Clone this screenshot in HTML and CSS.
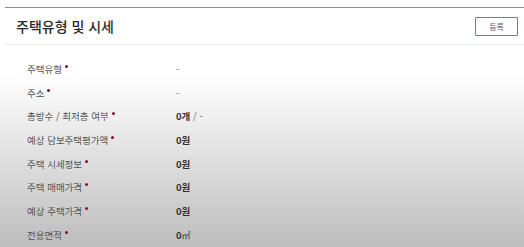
FILE: index.html
```html
<!DOCTYPE html>
<html lang="ko">
<head>
    <meta charset="UTF-8">
    <meta name="viewport" content="width=device-width, initial-scale=1.0">
    <title>주택유형 및 시세</title>
    <link rel="stylesheet" href="styles.css">
</head>
<body>

<div class="section">
    <header class="section-head">
        <h2>주택유형 및 시세</h2>
        <button class="btn-regist">등록</button>
    </header>

    <!-- 주택 정보 목록 -->
    <dl class="info-list">
        <div class="info-row">
            <dt>주택유형<span class="req"></span></dt>
            <dd class="empty">-</dd>
        </div>
        <div class="info-row">
            <dt>주소<span class="req"></span></dt>
            <dd class="empty">-</dd>
        </div>
        <div class="info-row">
            <dt>총방수 / 최저층 여부<span class="req"></span></dt>
            <dd>0개 <span class="light">/ -</span></dd>
        </div>
        <div class="info-row">
            <dt>예상 담보주택평가액<span class="req"></span></dt>
            <dd>0원</dd>
        </div>
        <div class="info-row">
            <dt>주택 시세정보<span class="req"></span></dt>
            <dd>0원</dd>
        </div>
        <div class="info-row">
            <dt>주택 매매가격<span class="req"></span></dt>
            <dd>0원</dd>
        </div>
        <div class="info-row">
            <dt>예상 주택가격<span class="req"></span></dt>
            <dd>0원</dd>
        </div>
        <div class="info-row">
            <dt>전용면적<span class="req"></span></dt>
            <dd>0<span class="unit">㎡</span></dd>
        </div>
    </dl>
</div>

</body>
</html>
```

FILE: styles.css
```css
html, body {
    height: 100%;
}

body {
    margin: 0;
    font-family: 'Noto Sans CJK KR', 'Noto Sans', sans-serif;
    background: linear-gradient(to bottom, #ffffff 0px, #ffffff 75px, #bdbdbd 247px);
    color: #333333;
}

.section {
    margin-left: 5px;
    padding-top: 7px;
}

.section-head {
    display: flex;
    justify-content: space-between;
    align-items: center;
    height: 36px;
    padding: 0 6px 0 11px;
    border-top: 1px solid #8f8f8f;
    border-bottom: 1px solid #eeeeee;
}

.section-head h2 {
    margin: 0;
    font-size: 14px;
    font-weight: 500;
    color: #2a2a2a;
}

.btn-regist {
    width: 43px;
    height: 19px;
    padding: 0;
    background-color: #ffffff;
    border: 1.5px solid #b0607f;
    border-radius: 1px;
    font-family: inherit;
    font-size: 8px;
    color: #555555;
}

.info-list {
    margin: 12px 0 0;
    padding: 0 0 0 22px;
}

.info-row {
    display: flex;
    align-items: center;
    height: 23.7px;
}

.info-row dt {
    width: 149px;
    font-size: 9.5px;
    color: #555555;
}

.info-row dd {
    margin: 0;
    font-size: 9.5px;
    font-weight: 700;
    color: #333333;
}

.info-row dd.empty {
    font-weight: 400;
    color: #777777;
}

.light {
    font-weight: 400;
    color: #666666;
}

.unit {
    font-weight: 400;
    font-size: 9px;
}

.req {
    display: inline-block;
    width: 3px;
    height: 3px;
    margin-left: 3px;
    vertical-align: 5px;
    border-radius: 50%;
    background-color: #8a0b2e;
}
```
